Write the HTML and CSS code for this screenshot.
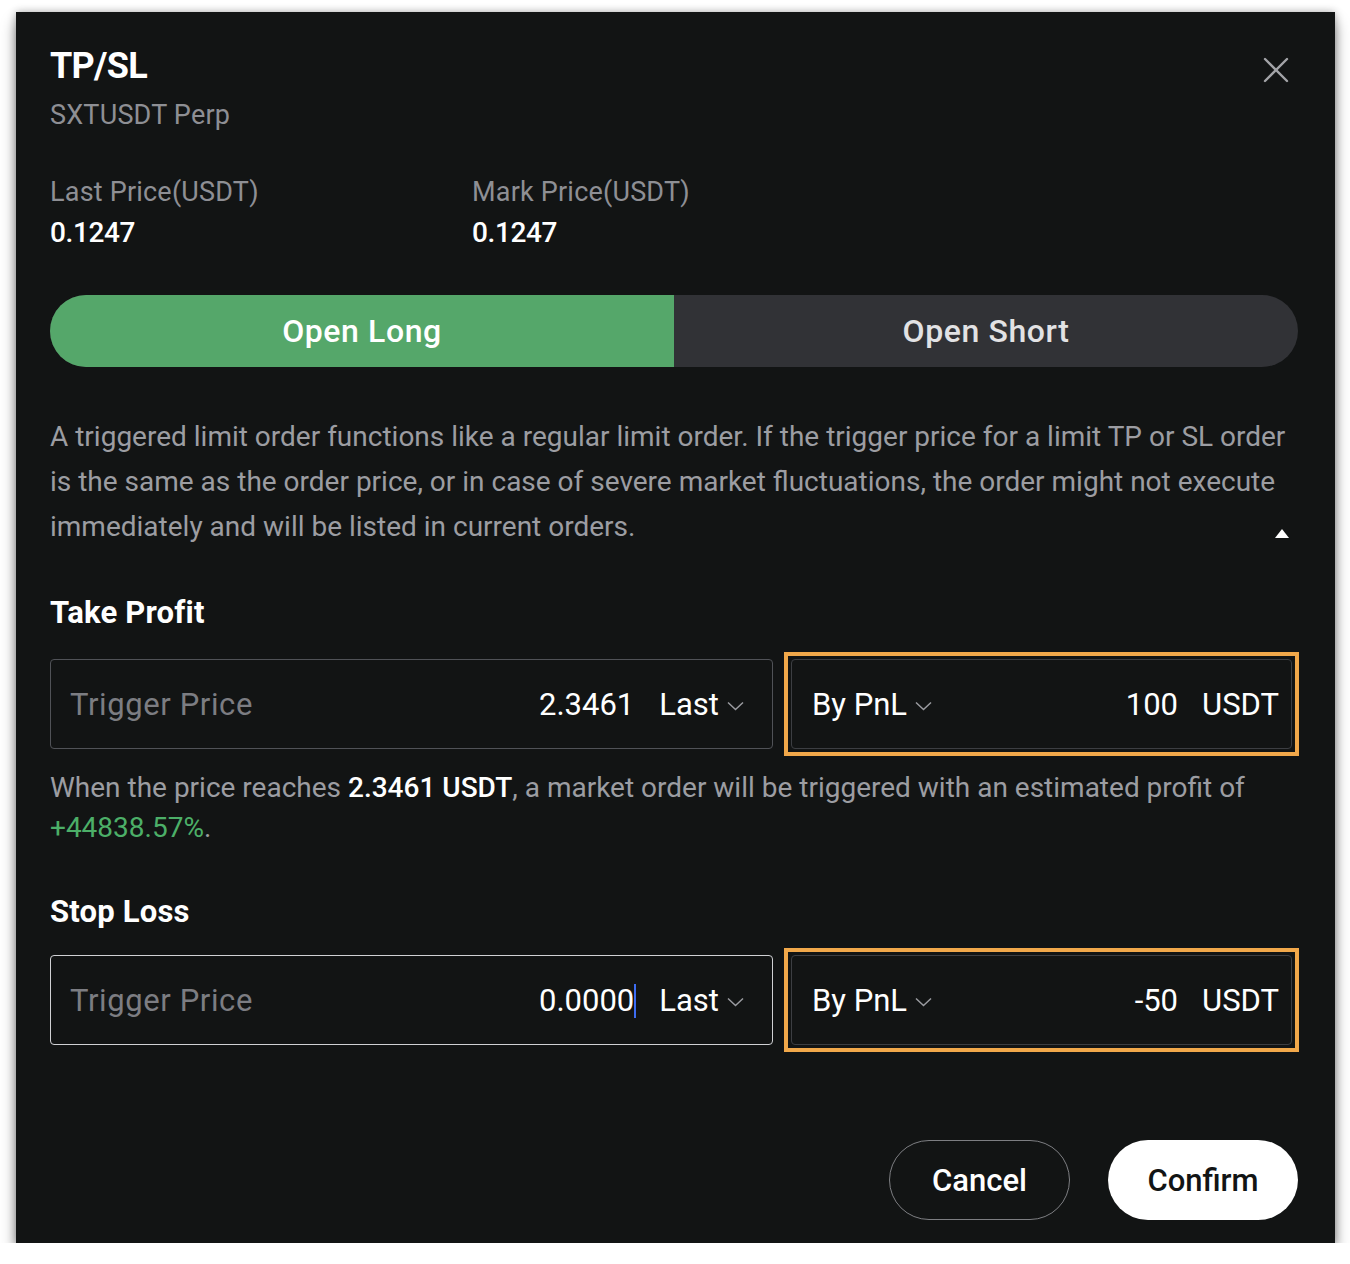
FILE: index.html
```html
<!DOCTYPE html>
<html lang="en">
<head>
<meta charset="utf-8">
<title>TP/SL</title>
<link rel="stylesheet" href="styles.css">
</head>
<body>
<div class="modal">
  <div class="header">
    <div>
      <div class="title">TP/SL</div>
      <div class="subtitle">SXTUSDT Perp</div>
    </div>
    <svg class="close" width="26" height="26" viewBox="0 0 26 26"><path d="M2 2L24 24M24 2L2 24" stroke="#a3a4a8" stroke-width="2.4" stroke-linecap="round"/></svg>
  </div>

  <div class="prices">
    <div class="price">
      <div class="label">Last Price(USDT)</div>
      <div class="value">0.1247</div>
    </div>
    <div class="price">
      <div class="label">Mark Price(USDT)</div>
      <div class="value">0.1247</div>
    </div>
  </div>

  <div class="toggle">
    <div class="tab tab-long">Open Long</div>
    <div class="tab tab-short">Open Short</div>
  </div>

  <div class="desc">
    <p>A triggered limit order functions like a regular limit order. If the trigger price for a limit TP or SL order is the same as the order price, or in case of severe market fluctuations, the order might not execute immediately and will be listed in current orders.</p>
    <span class="tri"></span>
  </div>

  <div class="section-title">Take Profit</div>
  <div class="row">
    <div class="box box-left">
      <span class="ph">Trigger Price</span>
      <span class="val">2.3461</span>
      <span class="sel">Last <svg class="chev" width="17" height="10" viewBox="0 0 17 10"><path d="M1 1.5L8.5 8.5L16 1.5" fill="none" stroke="#9a9ba0" stroke-width="1.5"/></svg></span>
    </div>
    <div class="hl">
      <div class="box box-right">
        <span class="sel">By PnL <svg class="chev" width="17" height="10" viewBox="0 0 17 10"><path d="M1 1.5L8.5 8.5L16 1.5" fill="none" stroke="#9a9ba0" stroke-width="1.5"/></svg></span>
        <span class="val val-right">100</span>
        <span class="unit">USDT</span>
      </div>
    </div>
  </div>
  <p class="hint">When the price reaches <b>2.3461 USDT</b>, a market order will be triggered with an estimated profit of <span class="green">+44838.57%</span>.</p>

  <div class="section-title section-sl">Stop Loss</div>
  <div class="row row-sl">
    <div class="box box-left box-focus">
      <span class="ph">Trigger Price</span>
      <span class="val">0.0000<span class="caret"></span></span>
      <span class="sel">Last <svg class="chev" width="17" height="10" viewBox="0 0 17 10"><path d="M1 1.5L8.5 8.5L16 1.5" fill="none" stroke="#9a9ba0" stroke-width="1.5"/></svg></span>
    </div>
    <div class="hl">
      <div class="box box-right">
        <span class="sel">By PnL <svg class="chev" width="17" height="10" viewBox="0 0 17 10"><path d="M1 1.5L8.5 8.5L16 1.5" fill="none" stroke="#9a9ba0" stroke-width="1.5"/></svg></span>
        <span class="val val-right">-50</span>
        <span class="unit">USDT</span>
      </div>
    </div>
  </div>

  <div class="actions">
    <button class="btn btn-cancel">Cancel</button>
    <button class="btn btn-confirm">Confirm</button>
  </div>
</div>
</body>
</html>
```

FILE: styles.css
```css
* { box-sizing: border-box; }
html, body { margin: 0; padding: 0; background: #ffffff; }
body { font-family: Roboto, "Noto Sans", sans-serif; }

.modal {
  margin: 12px 0 0 16px;
  width: 1319px;
  height: 1231px;
  background: #121414;
  padding: 32px 37px 0 34px;
  box-shadow: 0 10px 14px rgba(0,0,0,0.4), 0 0 8px rgba(0,0,0,0.3);
  color: #fff;
}

.header { display: flex; justify-content: space-between; align-items: flex-start; }
.title { font-size: 36px; font-weight: 700; line-height: 44px; letter-spacing: -0.7px; color: #fff; }
.subtitle { margin-top: 9px; font-size: 27px; line-height: 36px; color: #8e8f94; letter-spacing: 0.2px; }
.close { margin-top: 13px; margin-right: 9px; }

.prices { display: flex; margin-top: 41px; }
.price { width: 422px; }
.label { font-size: 27px; line-height: 36px; color: #8e8f94; letter-spacing: 0.2px; }
.value { margin-top: 5px; font-size: 28px; line-height: 36px; font-weight: 500; color: #fff; letter-spacing: -0.4px; }

.toggle { display: flex; margin-top: 44px; height: 72px; border-radius: 36px; overflow: hidden; background: #313236; }
.tab { flex: 1; display: flex; align-items: center; justify-content: center; font-size: 32px; font-weight: 500; letter-spacing: 0.6px; }
.tab-long { background: #55a76a; color: #fff; }
.tab-short { color: #e2e2e4; }

.desc { position: relative; margin-top: 47px; }
.desc p { margin: 0; font-size: 28px; line-height: 45px; color: #9c9da2; letter-spacing: 0; }
.tri {
  position: absolute; right: 9px; bottom: 11px;
  width: 0; height: 0;
  border-left: 7px solid transparent; border-right: 7px solid transparent;
  border-bottom: 9px solid #fff;
}

.section-title { margin-top: 44px; font-size: 31px; line-height: 40px; font-weight: 700; letter-spacing: 0.2px; }
.section-sl { margin-top: 44px; }

.row { display: grid; grid-template-columns: 723px 515px; column-gap: 11px; align-items: center; margin-top: 19px; }
.row-sl { margin-top: 16px; }

.box { height: 90px; border-radius: 4px; display: flex; align-items: center; font-size: 31px; }
.box-left { border: 1px solid #505257; padding: 0 28px 0 19px; }
.box-focus { border-color: #d0d1d4; }
.hl { border: 4px solid #f1a84a; padding: 3px; }
.box-right { border: 1px solid #3c3e42; padding: 0 12px 0 20px; }

.ph { color: #7c7d82; flex: 1; letter-spacing: 0.6px; }
.val { color: #fff; margin-right: 25px; position: relative; }
.val-right { margin-left: auto; margin-right: 24px; }
.sel { color: #fff; display: inline-flex; align-items: center; }
.chev { margin-left: 8px; margin-top: 4px; }
.unit { color: #fff; }
.caret { position: absolute; right: -2px; top: 2px; width: 2px; height: 34px; background: #3d6cf2; }

.hint { margin: 12px 0 0; font-size: 28px; line-height: 40px; color: #9c9da2; letter-spacing: 0; }
.hint b { color: #fff; font-weight: 500; }
.green { color: #4caf68; }

.actions { display: flex; justify-content: flex-end; gap: 38px; margin-top: 88px; }
.btn { height: 80px; border-radius: 40px; font-family: Roboto, "Noto Sans", sans-serif; font-size: 31px; font-weight: 500; cursor: pointer; }
.btn-cancel { width: 181px; background: transparent; border: 1.5px solid #7d7e82; color: #fff; }
.btn-confirm { width: 190px; background: #fff; border: none; color: #121414; }
```
